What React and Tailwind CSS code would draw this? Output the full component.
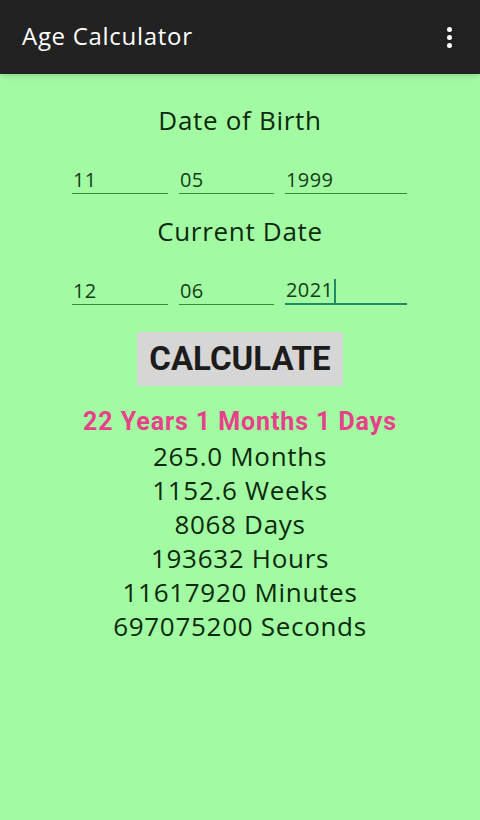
import React from 'react';

const body = { fontFamily: '"Open Sans", "Noto Sans", sans-serif' };
const roboto = { fontFamily: 'Roboto, "Liberation Sans", sans-serif' };

const Field = ({ value, width, focused }) => (
  <div
    className={`flex h-[33px] items-end pb-[3px] pl-[1px] text-[20px] font-medium leading-none tracking-[0.4px] text-[#123d18] ${width} ${
      focused ? 'border-b-2 border-[#1f8a66]' : 'border-b border-[#2f8f3c]'
    }`}
  >
    <span>{value}</span>
    {focused && <span className="mb-[-3px] ml-[1px] h-[24px] w-[2px] bg-[#1f8a66]" />}
  </div>
);

const DateRow = ({ day, month, year, focusYear }) => (
  <div className="flex w-[336px] gap-[11px]">
    <Field value={day} width="w-[96px]" />
    <Field value={month} width="w-[95px]" />
    <Field value={year} width="w-[122px]" focused={focusYear} />
  </div>
);

const results = [
  '265.0 Months',
  '1152.6 Weeks',
  '8068 Days',
  '193632 Hours',
  '11617920 Minutes',
  '697075200 Seconds',
];

export default function App() {
  return (
    <div className="flex h-[820px] w-[480px] flex-col bg-[#a2fba2]" style={body}>
      {/* Toolbar */}
      <div className="flex h-[74px] shrink-0 items-center justify-between bg-[#222222] pl-[22px] pr-[28px] shadow-md">
        <span className="pb-[2px] text-[24px] font-medium tracking-[0.7px] text-white">Age Calculator</span>
        <div className="flex flex-col gap-[3px]">
          <span className="h-[5px] w-[5px] rounded-full bg-white" />
          <span className="h-[5px] w-[5px] rounded-full bg-white" />
          <span className="h-[5px] w-[5px] rounded-full bg-white" />
        </div>
      </div>

      <div className="flex flex-col items-center pt-[29px] font-medium text-[#0b2a0d]">
        <h2 className="text-[26px] leading-[34px] tracking-[0.7px]">Date of Birth</h2>
        <div className="mt-[24px]">
          <DateRow day="11" month="05" year="1999" />
        </div>

        <h2 className="mt-[20px] text-[26px] leading-[34px] tracking-[0.7px]">Current Date</h2>
        <div className="mt-[24px]">
          <DateRow day="12" month="06" year="2021" focusYear />
        </div>

        <button
          className="mt-[27px] flex h-[54px] w-[206px] items-center justify-center bg-[#d6d6d6] text-[33px] font-bold text-[#1c1c1c]"
          style={roboto}
        >
          CALCULATE
        </button>

        <p
          className="mt-[19px] text-[25px] font-bold leading-[34px] tracking-[0.9px] text-[#e8408a]"
          style={roboto}
        >
          22 Years 1 Months 1 Days
        </p>
        {results.map((r) => (
          <p key={r} className="text-[26px] leading-[34px] tracking-[0.7px]">
            {r}
          </p>
        ))}
      </div>
    </div>
  );
}
